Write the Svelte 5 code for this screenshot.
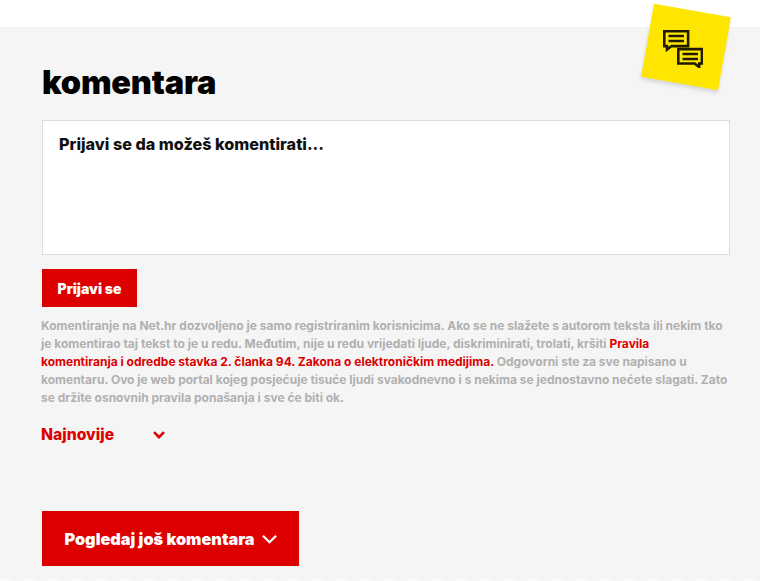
<script lang="ts">
	const rules = 'komentiranja i odredbe stavka 2. članka 94. Zakona o elektroničkim medijima.';
</script>

<div class="page">
	<section class="comments">
		<div class="sticker">
			<svg viewBox="0 0 40 38" width="40" height="38" fill="none" stroke="#1f1a00" stroke-width="2.6">
				<path d="M1.3 1.3h23.8v14.8h-16.5l-4.6 3.6v-3.6h-2.7z" />
				<path d="M5.5 6h15.5M5.5 11h15.5" />
				<path d="M15.3 19.1h23.6v14.4h-2.7v3.6l-4.6-3.6h-16.3z" />
				<path d="M19.5 24h15.5M19.5 29h15.5" />
			</svg>
		</div>

		<h2>komentara</h2>

		<div class="login-box">Prijavi se da možeš komentirati...</div>
		<button class="login-btn">Prijavi se</button>

		<p class="notice">
			Komentiranje na Net.hr dozvoljeno je samo registriranim korisnicima. Ako se ne slažete s autorom teksta ili nekim tko<br />
			je komentirao taj tekst to je u redu. Međutim, nije u redu vrijedati ljude, diskriminirati, trolati, kršiti
			<a href="#pravila">Pravila<br />{rules}</a>
			Odgovorni ste za sve napisano u<br />
			komentaru. Ovo je web portal kojeg posjećuje tisuće ljudi svakodnevno i s nekima se jednostavno nećete slagati. Zato<br />
			se držite osnovnih pravila ponašanja i sve će biti ok.
		</p>

		<div class="sort">
			<span>Najnovije</span>
			<svg viewBox="0 0 12 8" width="12" height="8" fill="none" stroke="#dc0000" stroke-width="2.6">
				<path d="M1 1.2l5 5 5-5" />
			</svg>
		</div>

		<button class="more-btn">
			Pogledaj još komentara
			<svg viewBox="0 0 16 10" width="15" height="10" fill="none" stroke="#fff" stroke-width="2.4">
				<path d="M1 1.5l7 7 7-7" />
			</svg>
		</button>
	</section>
</div>

<style>
	:global(body) {
		background: #fff;
		font-family: Inter, 'Liberation Sans', sans-serif;
	}

	.page {
		padding-top: 27px;
		height: 581px;
		box-sizing: border-box;
		overflow: hidden;
	}

	.comments {
		position: relative;
		height: 554px;
		box-sizing: border-box;
		padding: 38px 30px 0 42px;
		background-color: #f5f5f5;
		background-image: repeating-linear-gradient(90deg, #fafafa 0 12px, #f5f5f5 12px 24px);
		background-size: 100% 3px;
		background-position: bottom;
		background-repeat: no-repeat;
	}

	.sticker {
		position: absolute;
		top: -17px;
		left: 647px;
		width: 78px;
		height: 74px;
		background: #ffe600;
		transform: rotate(10deg);
		box-shadow: 0 3px 4px rgba(0, 0, 0, 0.12);
		display: flex;
		align-items: center;
		justify-content: center;
	}

	.sticker svg {
		transform: rotate(-10deg) translate(-3px, 2px);
	}

	h2 {
		margin: 0;
		font-size: 32.5px;
		line-height: 36px;
		font-weight: 900;
		color: #000;
		letter-spacing: -0.2px;
	}

	.login-box {
		margin-top: 19px;
		height: 135px;
		box-sizing: border-box;
		padding: 13px 16px;
		background: #fff;
		border: 1px solid #dcdcdc;
		font-size: 16.2px;
		line-height: 20px;
		font-weight: 800;
		color: #111;
	}

	button {
		display: flex;
		align-items: center;
		border: 0;
		background: #dc0000;
		color: #fff;
		font-family: inherit;
		font-weight: 900;
	}

	.login-btn {
		margin-top: 14px;
		width: 95px;
		height: 38px;
		justify-content: center;
		padding: 0;
		font-size: 14px;
	}

	.notice {
		margin: 10px 0 0;
		margin-left: -1px;
		font-size: 12px;
		line-height: 18px;
		font-weight: 700;
		color: #b0b0b0;
		white-space: nowrap;
	}

	.notice a {
		color: #dc0000;
		text-decoration: none;
	}

	.sort {
		margin-top: 18px;
		margin-left: -1px;
		display: flex;
		align-items: center;
		gap: 39px;
		font-size: 15.7px;
		line-height: 20px;
		font-weight: 800;
		color: #dc0000;
	}

	.more-btn {
		margin-top: 66px;
		width: 257px;
		height: 55px;
		justify-content: center;
		gap: 7px;
		padding: 0;
		font-size: 16.3px;
	}
</style>
